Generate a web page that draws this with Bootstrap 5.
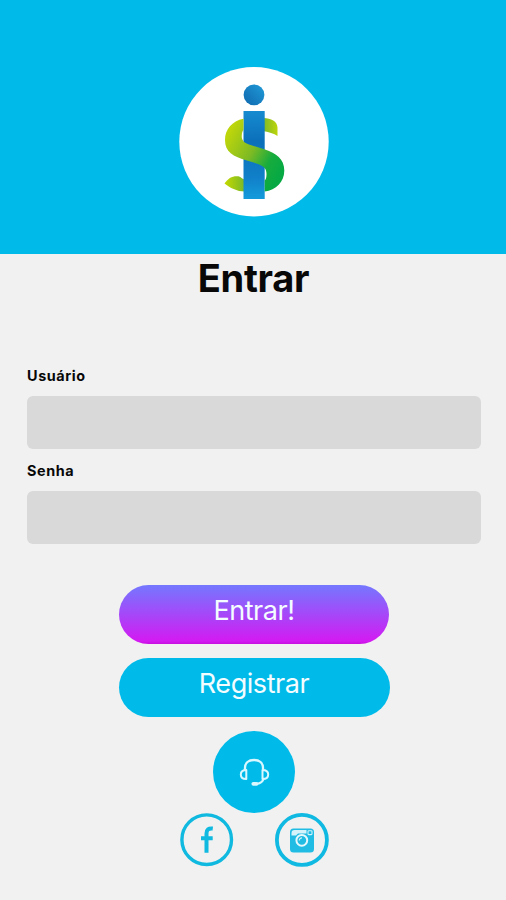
<!DOCTYPE html>
<html lang="pt-BR">
<head>
<meta charset="utf-8">
<meta name="viewport" content="width=device-width, initial-scale=1">
<title>Entrar</title>
<link href="https://cdn.jsdelivr.net/npm/bootstrap@5.3.0/dist/css/bootstrap.min.css" rel="stylesheet">
<style>
  body { background: #f1f1f1; font-family: Inter, "Liberation Sans", sans-serif; color: #080808; height: 900px; overflow: hidden; }
  .hero { height: 254px; background: #00bbe9; padding: 67px 0 0 2px; }
  .page-title { font-size: 38px; line-height: 48px; font-weight: 700; letter-spacing: -.3px; height: 108px; padding-left: 1px; }
  .login-form { padding: 0 25px 0 27px; }
  .field-label { font-size: 14.4px; line-height: 18px; font-weight: 700; height: 34px; padding-top: 5px; letter-spacing: .6px; }
  .field-input, .field-input:focus { height: 53px; background: #d9d9d9; border-radius: 6px; }
  .actions { padding: 41px 0 0 2px; }
  .pill { height: 59px; font-size: 27px; line-height: 32px; padding: 0 0 7px; width: 271px; letter-spacing: -.45px; color: #f3fcff; }
  .pill:hover { color: #fff; }
  .pill-enter { width: 270px; background: linear-gradient(#7478ff, #d31bf2 95%, #c80fe0); }
  .pill-register { background: #00bbe9; margin-top: 14px; }
  .support { width: 82px; height: 82px; background: #00bbe9; margin-top: 14px; }
  .social { gap: 41px; }
</style>
</head>
<body>
<header class="hero d-flex justify-content-center">
  <svg width="150" height="150" viewBox="179 67 150 150" role="img" aria-label="iS">
    <defs>
      <linearGradient id="bar" x1="0" y1="0" x2="0" y2="1">
        <stop offset="0" stop-color="#168bd0"/><stop offset=".35" stop-color="#0b6fb9"/><stop offset=".75" stop-color="#117fc9"/><stop offset="1" stop-color="#149bdc"/>
      </linearGradient>
      <linearGradient id="dot" x1="0" y1="1" x2="1" y2="0">
        <stop offset="0" stop-color="#0f68ae"/><stop offset="1" stop-color="#209bd8"/>
      </linearGradient>
      <linearGradient id="ess" gradientUnits="userSpaceOnUse" x1="225" y1="140" x2="282" y2="172">
        <stop offset="0" stop-color="#bdd50b"/><stop offset=".45" stop-color="#7dba24"/><stop offset=".75" stop-color="#17ac3d"/><stop offset="1" stop-color="#06a944"/>
      </linearGradient>
      <linearGradient id="tip" x1="0" y1="0" x2="1" y2="0">
        <stop offset="0" stop-color="#79b729"/><stop offset="1" stop-color="#bdd50b"/>
      </linearGradient>
      <linearGradient id="tail" x1="0" y1="0" x2="1" y2="0">
        <stop offset="0" stop-color="#c5d900"/><stop offset="1" stop-color="#74b62b"/>
      </linearGradient>
    </defs>
    <circle cx="254" cy="141.700" r="74.700" fill="#fff"/>
    <path d="M262 118C270 117.500 277.500 121 277.500 127.500V136C274 133.500 269 132 262 131Z" fill="url(#tip)"/>
    <path d="M224.500 183.500C228 178 233 175.500 238.500 176.300C241 177 242.500 179.500 246 180V191.500C238 192 230 188 224.500 183.500Z" fill="url(#tail)"/>
    <circle cx="254" cy="94.800" r="10.400" fill="url(#dot)"/>
    <path d="M243.500 111H264.700V199H243.500Z" fill="url(#bar)"/>
    <path d="M243.500 118.800C232 121 225 129.500 225 140C225 152 233 156.500 247 160.500L258 164C264.500 166.500 266.500 169 266.500 174C266.500 177.500 266 179.500 264.700 180.500V191.500C276 190 284.300 182 284.300 170.500C284.300 159 276 153 265 149.500L249 144.500C243.500 142.500 241.300 139.500 241.800 135C242 132.500 242.500 131 243.500 130Z" fill="url(#ess)"/>
  </svg>
</header>
<main>
  <h1 class="page-title text-center mb-0">Entrar</h1>
  <form class="login-form" onsubmit="return false">
    <label class="field-label d-block" for="usuario">Usuário</label>
    <input class="field-input form-control border-0 shadow-none" id="usuario" type="text">
    <label class="field-label d-block mt-2" for="senha">Senha</label>
    <input class="field-input form-control border-0 shadow-none" id="senha" type="password">
  </form>
  <div class="actions d-flex flex-column align-items-center">
    <button class="pill pill-enter btn rounded-pill border-0" type="button">Entrar!</button>
    <button class="pill pill-register btn rounded-pill border-0" type="button">Registrar</button>
    <a class="support rounded-circle d-flex justify-content-center align-items-center" href="#" aria-label="Suporte">
      <svg width="32" height="30" viewBox="238 756 32 30" fill="none" stroke="#d8f7ff" stroke-width="2.300" stroke-linecap="round">
        <path d="M245 768V767C245 762 248.500 759 254 759S263 762 263 767V768"/>
        <path d="M246.300 769V778C242.500 778 240.800 776 240.800 773.500S242.500 769 246.300 769ZM262.500 769V778C266.500 778 268.200 776 268.200 773.500S266.500 769 262.500 769Z" stroke-width="2" stroke-linejoin="round"/>
        <path d="M263.300 778.500C262.500 781 260 782.300 257 782.800"/>
        <path d="M253.300 782.800H256.500" stroke-width="3.800"/>
      </svg>
    </a>
    <div class="social d-flex">
      <a class="d-block lh-1" href="#" aria-label="Facebook">
        <svg width="54" height="54" viewBox="180 813 54 54" fill="none" stroke="#0fb9df">
          <circle cx="206.700" cy="839.700" r="24.800" stroke-width="3.400"/>
          <path d="M206.500 852.800V833.500C206.500 829.500 208.500 828 212.800 828.500M201 838.300H212.700" stroke-width="4"/>
        </svg>
      </a>
      <a class="d-block lh-1" href="#" aria-label="Instagram">
        <svg width="54" height="54" viewBox="275 812 54 54">
          <circle cx="301.900" cy="838.900" r="25" fill="none" stroke="#0fb9e2" stroke-width="3.800"/>
          <rect x="290" y="827.500" width="24" height="24" rx="3.500" fill="#20bce4"/>
          <path d="M291.500 834.500V832Q291.500 829 294.500 829H306.500V832.500H298L296 834.500Z" fill="#d5f3fa"/>
          <rect x="308" y="829.800" width="4" height="3.800" rx=".8" fill="none" stroke="#d5f3fa" stroke-width="1.100"/>
          <circle cx="301.800" cy="839.300" r="5.400" fill="#20bce4" stroke="#e6f8fc" stroke-width="2"/>
          <path d="M299.300 839.500A2.600 2.600 0 0 1 302 836.800" fill="none" stroke="#d5f3fa" stroke-width="1.200"/>
        </svg>
      </a>
    </div>
  </div>
</main>
<script src="https://cdn.jsdelivr.net/npm/bootstrap@5.3.0/dist/js/bootstrap.bundle.min.js"></script>
</body>
</html>
